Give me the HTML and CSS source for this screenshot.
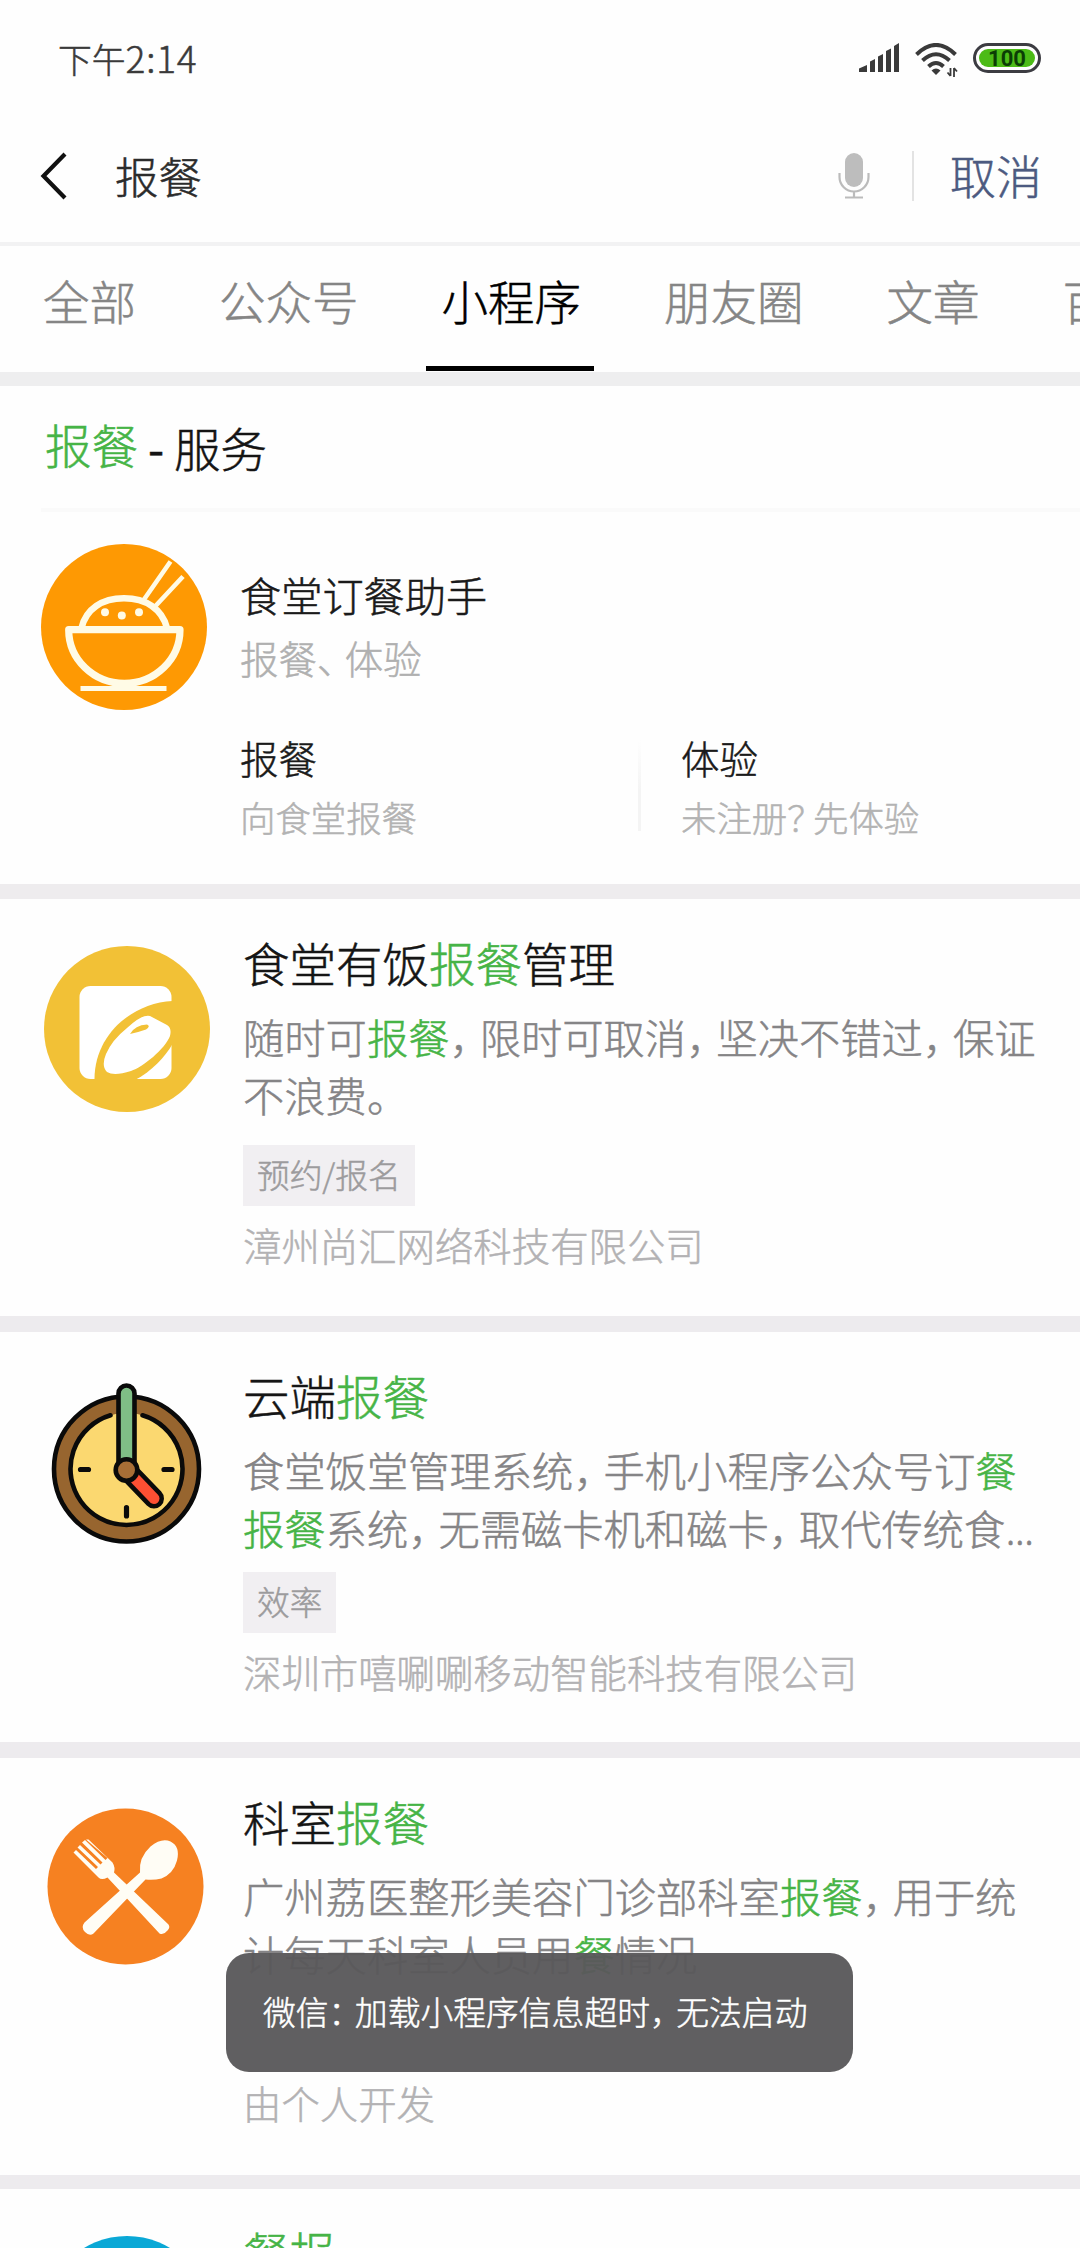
FILE: index.html
```html
<!DOCTYPE html>
<html lang="zh-CN">
<head>
<meta charset="utf-8">
<title>报餐</title>
<link rel="stylesheet" href="styles.css">
</head>
<body>
<div class="screen">
  <header class="status">
    <div class="time">下午<span class="digits">2:14</span></div>
    <div class="indicators">
      <svg class="signal" width="40" height="29" viewBox="0 0 40 29" fill="#3a3a3a">
        <path d="M0 29v-3.500L8 22v7zM11 29V18.500L16 16v13zM19 29V13.500L24 11v18zM27 29V8L32 5.500V29zM35 29V3L40 0v29z"/>
      </svg>
      <svg class="wifi" width="43" height="35" viewBox="0 0 43 35">
        <g fill="none" stroke="#3a3a3a" stroke-width="4">
          <path d="M1.500 11.500Q21 -7.500 40.500 11.500"/>
          <path d="M7.500 17.500Q21 5 34.500 17.500"/>
          <path d="M13.500 23.500Q21 16.500 28.500 23.500"/>
        </g>
        <path d="M16.500 27.500Q21 23.500 25.500 27.500L21 32z" fill="#3a3a3a"/>
        <path d="M35.500 25v8M39 25v9M35.500 33l-3-3.500M39 25l3 3.500" fill="none" stroke="#3a3a3a" stroke-width="1.800"/>
      </svg>
      <div class="battery"><div class="charge">100</div></div>
    </div>
  </header>

  <div class="search">
    <svg class="back" width="28" height="48" viewBox="0 0 28 48" fill="none" stroke="#111" stroke-width="4.200"><path d="M25 2L3.500 24L25 46"/></svg>
    <div class="query">报餐</div>
    <svg class="mic" width="32" height="46" viewBox="0 0 32 46">
      <rect x="7" y="0" width="18" height="34" rx="9" fill="#bdbdbd"/>
      <path d="M1.500 20v4a14.500 14.500 0 0 0 29 0v-4M16 38.500V44M7 44.500h18" fill="none" stroke="#bbb" stroke-width="2.200"/>
    </svg>
    <div class="cancel">取消</div>
  </div>

  <nav class="tabs">
    <div class="tab">全部</div>
    <div class="tab">公众号</div>
    <div class="tab active">小程序</div>
    <div class="tab">朋友圈</div>
    <div class="tab">文章</div>
    <div class="tab">百科</div>
  </nav>

  <section class="service">
    <h2 class="heading"><em>报餐</em><span class="suffix"><span class="dash">-</span>服务</span></h2>
    <div class="service-body">
      <svg class="logo" width="166" height="166" viewBox="0 0 166 166">
        <circle cx="83" cy="83" r="83" fill="#fe9903"/>
        <g fill="none" stroke="#fffbe6" stroke-width="6.500">
          <path d="M27.700 85.700H139A55.500 53.500 0 0 1 27.700 85.700z" stroke-width="7.200" stroke-linejoin="round"/>
          <path d="M40.500 84C45 65 61 54.300 83 54.300S121 65 126 84"/>
          <path d="M39.500 144.500h86" stroke-width="5"/>
          <path d="M103 55.500L129.500 17.500M114.500 62L142 32.500" stroke-width="4.600"/>
        </g>
        <g fill="#fffbe6"><circle cx="64" cy="68.300" r="4"/><circle cx="80.800" cy="71.500" r="4"/><circle cx="98" cy="68.300" r="4"/></g>
      </svg>
      <div class="service-info">
        <h3 class="service-name">食堂订餐助手</h3>
        <p class="service-tags">报餐<span class="pn">、</span>体验</p>
        <div class="entries">
          <div class="entry"><h4>报餐</h4><p>向食堂报餐</p></div>
          <div class="entry"><h4>体验</h4><p>未注册<span class="pn">？</span>先体验</p></div>
        </div>
      </div>
    </div>
  </section>

  <article class="card first">
    <svg class="logo" width="166" height="166" viewBox="0 0 166 166">
      <circle cx="83" cy="83" r="83" fill="#f2c136"/>
      <rect x="35.500" y="40" width="92" height="93" rx="11" fill="#fff"/>
      <path d="M128.500 55C88 57 50 89 50.500 134H91C108 125 121 111 128.500 98z" fill="#f2c136"/>
      <path d="M83 82Q98 68 106 70L123 79Q128 82 126 90C121 103 99 121 87 125Q70 130.500 63 126Q57 120 62 108Q68 94 83 82z" fill="#fff"/>
      <path d="M86 88Q91 79 103 78.500Q107 80 102 83.500Q95 86 86 88z" fill="#f2c136"/>
    </svg>
    <div class="info">
      <h3 class="title">食堂有饭<em>报餐</em>管理</h3>
      <p class="desc">随时可<em>报餐</em><span class="pn">，</span>限时可取消<span class="pn">，</span>坚决不错过<span class="pn">，</span>保证<br>不浪费。</p>
      <span class="tag">预约/报名</span>
      <p class="owner">漳州尚汇网络科技有限公司</p>
    </div>
  </article>

  <article class="card">
    <svg class="logo" width="166" height="166" viewBox="-6 -3.500 166 166">
      <g stroke="#0a0a0a" stroke-width="4.600" stroke-linecap="round">
        <circle cx="76.500" cy="86.500" r="72.500" fill="#97652f"/>
        <circle cx="76.500" cy="86.500" r="56" fill="#fbd870" stroke="none"/>
        <path d="M92.500 32.800A56 56 0 1 1 60.500 32.800" fill="none"/>
        <path d="M30.500 87h8M114 87h8M76.500 125v8.500" stroke-width="5.200"/>
        <path d="M78 89L104 116" stroke-width="20"/>
        <path d="M82 93L104 116" stroke="#fc4f33" stroke-width="11"/>
        <path d="M68.500 86V11a8 8 0 0 1 16 0V86z" fill="#7fbe86"/>
        <circle cx="76.500" cy="87.500" r="10.800" fill="#a86e36"/>
      </g>
    </svg>
    <div class="info">
      <h3 class="title">云端<em>报餐</em></h3>
      <p class="desc tight">食堂饭堂管理系统<span class="pn">，</span>手机小程序公众号订<em>餐</em><br><em>报餐</em>系统<span class="pn">，</span>无需磁卡机和磁卡<span class="pn">，</span>取代传统食<span class="dots">...</span></p>
      <span class="tag">效率</span>
      <p class="owner">深圳市嘻唰唰移动智能科技有限公司</p>
    </div>
  </article>

  <article class="card third">
    <svg class="logo" width="166" height="166" viewBox="-3.500 -3.500 166 166">
      <circle cx="78" cy="78" r="78" fill="#f68121"/>
      <g fill="#fffdf5">
        <path d="M92.500 64Q91 49 103 38Q114 29 123 33Q133 38 129.500 52Q126 65 114 70Q106 72 98 71L46 125Q42 128 37.500 123.500Q33 119 37 114z"/>
        <path d="M41 31L65 54Q68 59 66.500 64L121 116Q123 119 120 122Q116 127 112 125L60 69Q54 72 51 69L26 44L28.500 41.500L48.500 60.500L50.500 58.500L30 39L32.500 36.500L53 56L55 54L34.500 34L37.500 31.500L58 51.500L60 49.500L38.500 31z"/>
      </g>
    </svg>
    <div class="info">
      <h3 class="title">科室<em>报餐</em></h3>
      <p class="desc">广州荔医整形美容门诊部科室<em>报餐</em><span class="pn">，</span>用于统<br>计每天科室人员用<em>餐</em>情况</p>
      <p class="owner developer">由个人开发</p>
    </div>
  </article>

  <article class="card last">
    <svg class="logo" width="166" height="166" viewBox="0 0 166 166"><circle cx="83" cy="83" r="83" fill="#0aa8d6"/></svg>
    <div class="info"><h3 class="title"><em>餐报</em></h3></div>
  </article>

  <div class="toast">微信<span class="pn">：</span>加载小程序信息超时<span class="pn">，</span>无法启动</div>
</div>
</body>
</html>
```
FILE: styles.css
```css
* { box-sizing: border-box; margin: 0; padding: 0; }
body {
  font-family: "Noto Sans CJK SC", sans-serif;
  font-weight: 300;
  -webkit-text-stroke: 0.5px currentColor;
  background: #fefefe;
}
h2, h3, h4 { font-weight: inherit; }
em { font-style: normal; color: #46b446; -webkit-text-stroke-color: #46b446; }
svg { display: block; flex: none; }
.pn { letter-spacing: -0.27em; }

.screen {
  position: relative;
  width: 1080px;
  height: 2248px;
  overflow: hidden;
  background: #fefefe;
  white-space: nowrap;
}

.status {
  display: flex;
  justify-content: space-between;
  height: 110px;
  padding: 0 39px 0 58px;
}
.time { line-height: 115px; font-size: 33.800px; color: #3a3a3a; }
.digits { font-size: 37px; letter-spacing: 0.8px; }
.indicators { display: flex; padding-top: 43px; }
.wifi { margin-left: 16px; }
.battery {
  width: 68px;
  height: 30px;
  margin-left: 15px;
  padding: 3px;
  border: 3px solid #3c3c42;
  border-radius: 15px;
}
.charge {
  height: 18px;
  border-radius: 9px;
  background: #4cbb17;
  font: 700 22px/19px Roboto, sans-serif;
  -webkit-text-stroke: 0;
  text-align: center;
  color: #0b3d05;
}

.search {
  display: flex;
  align-items: center;
  height: 136px;
  padding: 0 38px 0 40px;
  border-bottom: 4px solid #f2f2f3;
}
.query { margin: -3px 0 0 47px; font-size: 43.400px; line-height: 60px; color: #2b2b2b; }
.mic { margin-left: auto; }
.cancel {
  height: 50px;
  margin-left: 42px;
  padding-left: 36px;
  border-left: 2px solid #e3e3e3;
  font-size: 46px;
  line-height: 47px;
  color: #4c5a80;
}

.tabs {
  display: flex;
  gap: 54.500px;
  height: 140px;
  padding-left: 27px;
  border-bottom: 14px solid #eeeeef;
}
.tab {
  flex: none;
  height: 125px;
  padding: 0 12.500px 0 16px;
  font-size: 46.500px;
  line-height: 107px;
  color: #858585;
}
.active { color: #000; border-bottom: 5px solid #000; }

.service {
  height: 513px;
  border-bottom: 15px solid #eeecee;
  padding-left: 41px;
}
.heading {
  display: flex;
  height: 126px;
  padding-left: 4px;
  border-bottom: 4px solid #fafafa;
  font-size: 46.500px;
  line-height: 115px;
}
.suffix { padding-top: 3px; color: #141414; }
.dash { display: inline-block; width: 36px; text-align: center; font-weight: 400; }
.service-body { display: flex; align-items: flex-start; padding-top: 32px; }
.service-info { flex: 1; margin-left: 33px; padding-top: 20px; }
.service-name { font-size: 41.200px; line-height: 60px; color: #1a1a1a; }
.service-tags { margin-top: 4px; font-size: 38.400px; line-height: 58px; color: #b0b0b0; }
.entries { display: flex; align-items: flex-start; margin-top: 42px; }
.entry { width: 398px; height: 103px; }
.entry + .entry {
  border-left: 3px solid;
  border-image: linear-gradient(#fefefe 12%, #f4f4f4 60%) 1;
  padding-left: 40px;
}
.entry h4 { font-size: 38.400px; line-height: 58px; color: #1a1a1a; }
.entry p { margin-top: 3px; font-size: 35.400px; line-height: 56px; color: #b3b3b3; }

.card {
  display: flex;
  align-items: flex-start;
  height: 426px;
  padding: 47px 0 0 44px;
  border-bottom: 16px solid #edebee;
}
.first { height: 433px; }
.third { height: 431px; border-bottom-width: 14px; }
.last { border-bottom: 0; }
.info { display: flex; flex-direction: column; align-items: flex-start; margin: -14px 0 0 33px; }
.title { font-size: 46.500px; line-height: 60px; color: #151515; }
.desc { margin: 16px 0 22px; font-size: 41.300px; line-height: 57.600px; color: #858486; }
.tight { margin-bottom: 14px; }
.dots { font-family: "Noto Sans", sans-serif; letter-spacing: -0.02em; }
.tag {
  height: 61px;
  padding: 0 14px;
  background: #f1eff2;
  font-size: 32.700px;
  line-height: 57px;
  color: #9c9b9d;
}
.owner { margin-top: 13px; font-size: 38.400px; line-height: 50px; color: #b3b2b4; }
.developer { margin-top: 73px; }

.toast {
  position: absolute;
  left: 226px;
  top: 1953px;
  width: 627px;
  height: 119px;
  padding-left: 37px;
  border-radius: 23px;
  background: rgba(90, 88, 91, 0.96);
  font-size: 32.800px;
  line-height: 116px;
  color: #fff;
}
.toast .pn { letter-spacing: -0.2em; }
```
